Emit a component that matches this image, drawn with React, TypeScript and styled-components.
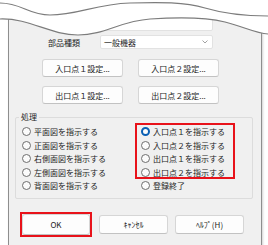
import styled, { createGlobalStyle } from 'styled-components';

const leftOptions = [
  '平面図を指示する',
  '正面図を指示する',
  '右側面図を指示する',
  '左側面図を指示する',
  '背面図を指示する',
];

const pointOptions = [
  '入口点１を指示する',
  '入口点２を指示する',
  '出口点１を指示する',
  '出口点２を指示する',
];

const GlobalStyle = createGlobalStyle`
  html, body {
    margin: 0;
    padding: 0;
    background: #ffffff;
  }
  body {
    font-family: "Noto Sans CJK JP", "Noto Sans", sans-serif;
  }
`;

const Chevron = () => (
  <svg width="6" height="4" viewBox="0 0 6 4">
    <polyline points="0.5,0.5 3,3 5.5,0.5" fill="none" stroke="#8a8a8a" strokeWidth="0.8" />
  </svg>
);

// torn-off top of the dialog
const TearEdge = () => (
  <TearSvg width="268" height="40" viewBox="0 0 268 40">
    <path
      d="M0,0 H268 V34 C255,33 245,27 225,22 C205,17 180,17 150,19 C120,21 105,35 78,35 C50,35 30,18 0,19 Z"
      fill="#ffffff"
    />
    <path
      d="M0,3 C22,3 28,15 50,15 C78,15 95,4 130,3 C160,2 185,2 205,8 C225,14 245,16 268,16"
      fill="none"
      stroke="#7c7c7c"
      strokeWidth="1.2"
    />
    <path
      d="M0,19 C30,18 50,35 78,35 C105,35 120,21 150,19 C180,17 205,17 225,22 C245,27 255,33 268,34"
      fill="none"
      stroke="#7c7c7c"
      strokeWidth="1.2"
    />
  </TearSvg>
);

const App = () => {
  return (
    <Page>
      <GlobalStyle />
      <Dialog>
        <FieldRow>
          <FieldLabel />
          <Select $tall />
        </FieldRow>
        <FieldRow $gap={4}>
          <FieldLabel>部品種類</FieldLabel>
          <Select>
            <span>一般機器</span>
            <Chevron />
          </Select>
        </FieldRow>
        <ButtonRow $gap={10}>
          <PushButton>入口点１設定...</PushButton>
          <PushButton>入口点２設定...</PushButton>
        </ButtonRow>
        <ButtonRow $gap={9}>
          <PushButton>出口点１設定...</PushButton>
          <PushButton>出口点２設定...</PushButton>
        </ButtonRow>
        <GroupBox>
          <Legend>処理</Legend>
          <OptionColumn>
            {leftOptions.map((label) => (
              <Option key={label}>
                <RadioDot />
                {label}
              </Option>
            ))}
          </OptionColumn>
          <OptionColumn>
            <Marked>
              {pointOptions.map((label, idx) => (
                <Option key={label}>
                  <RadioDot $checked={idx === 0} />
                  {label}
                </Option>
              ))}
              <RedMark />
            </Marked>
            <Option>
              <RadioDot />
              登録終了
            </Option>
          </OptionColumn>
        </GroupBox>
        <Footer>
          <FocusFrame>
            <DialogButton $width={68}>OK</DialogButton>
          </FocusFrame>
          <DialogButton>ｷｬﾝｾﾙ</DialogButton>
          <DialogButton>ﾍﾙﾌﾟ(H)</DialogButton>
        </Footer>
      </Dialog>
      <TearEdge />
    </Page>
  );
};

export default App;

const Page = styled.div`
  position: relative;
  width: 268px;
  height: 245px;
  overflow: hidden;
  background: #ffffff;
  padding-top: 10px;
  box-sizing: border-box;
`;

const TearSvg = styled.svg`
  position: absolute;
  top: 0;
  left: 0;
  pointer-events: none;
`;

const Dialog = styled.div`
  margin-left: 8px;
  width: 254px;
  box-sizing: border-box;
  background: #f0f0f0;
  border: 1px solid #8e8e8e;
  border-top: none;
  box-shadow: 1px 1px 2px rgba(0, 0, 0, 0.18);
  padding: 4px 0 9px;
  display: flex;
  flex-direction: column;
  font-size: 8px;
  color: #1b1b1b;
`;

const FieldRow = styled.div<{ $gap?: number }>`
  display: flex;
  align-items: center;
  margin-top: ${(p) => p.$gap ?? 0}px;
`;

const FieldLabel = styled.div`
  width: 91px;
  box-sizing: border-box;
  padding-left: 39px;
  white-space: nowrap;
`;

const Select = styled.div<{ $tall?: boolean }>`
  width: 113px;
  height: ${(p) => (p.$tall ? 17 : 14)}px;
  box-sizing: border-box;
  background: #ffffff;
  border: 1px solid #e2e2e2;
  border-radius: 2px;
  display: flex;
  align-items: center;
  justify-content: space-between;
  padding: 0 4px 0 3px;
`;

const ButtonRow = styled.div<{ $gap: number }>`
  display: flex;
  gap: 15px;
  padding-left: 33px;
  margin-top: ${(p) => p.$gap}px;
`;

const PushButton = styled.div`
  width: 81px;
  height: 18px;
  box-sizing: border-box;
  background: #fdfdfd;
  border: 1px solid #d6d6d6;
  border-bottom-color: #c2c2c2;
  border-radius: 3px;
  display: flex;
  align-items: center;
  justify-content: center;
  white-space: nowrap;
`;

const GroupBox = styled.div`
  position: relative;
  margin: 13px 0 0 6px;
  width: 238px;
  box-sizing: border-box;
  border: 1px solid #dcdcdc;
  border-radius: 2px;
  padding: 7px 0 5px 6px;
  display: grid;
  grid-template-columns: 119px 1fr;
`;

const Legend = styled.span`
  position: absolute;
  top: -7px;
  left: 3px;
  padding: 0 2px;
  background: #f0f0f0;
  line-height: 12px;
`;

const OptionColumn = styled.div`
  display: flex;
  flex-direction: column;
`;

const Marked = styled.div`
  position: relative;
  display: flex;
  flex-direction: column;
`;

const RedMark = styled.div`
  position: absolute;
  top: -2px;
  left: -6px;
  width: 100px;
  height: 56px;
  box-sizing: border-box;
  border: 2px solid #e8121a;
  pointer-events: none;
`;

const Option = styled.div`
  height: 13.5px;
  display: flex;
  align-items: center;
  gap: 3px;
  white-space: nowrap;
  color: #1e1e1e;
`;

const RadioDot = styled.span<{ $checked?: boolean }>`
  width: 9px;
  height: 9px;
  flex: none;
  border-radius: 50%;
  box-sizing: border-box;
  background: #fbfbfb;
  border: ${(p) => (p.$checked ? '2.6px solid #0a5fb4' : '1px solid #6e6e6e')};
`;

const Footer = styled.div`
  display: flex;
  align-items: center;
  gap: 7px;
  padding-left: 11px;
  margin-top: 13px;
`;

const FocusFrame = styled.div`
  border: 2px solid #e8121a;
  display: flex;
`;

const DialogButton = styled.div<{ $width?: number }>`
  width: ${(p) => p.$width ?? 69}px;
  height: ${(p) => (p.$width ? 21 : 19)}px;
  box-sizing: border-box;
  background: #fdfdfd;
  border: 1px solid #d6d6d6;
  border-bottom-color: #c2c2c2;
  border-radius: 3px;
  display: flex;
  align-items: center;
  justify-content: center;
  white-space: nowrap;
`;
